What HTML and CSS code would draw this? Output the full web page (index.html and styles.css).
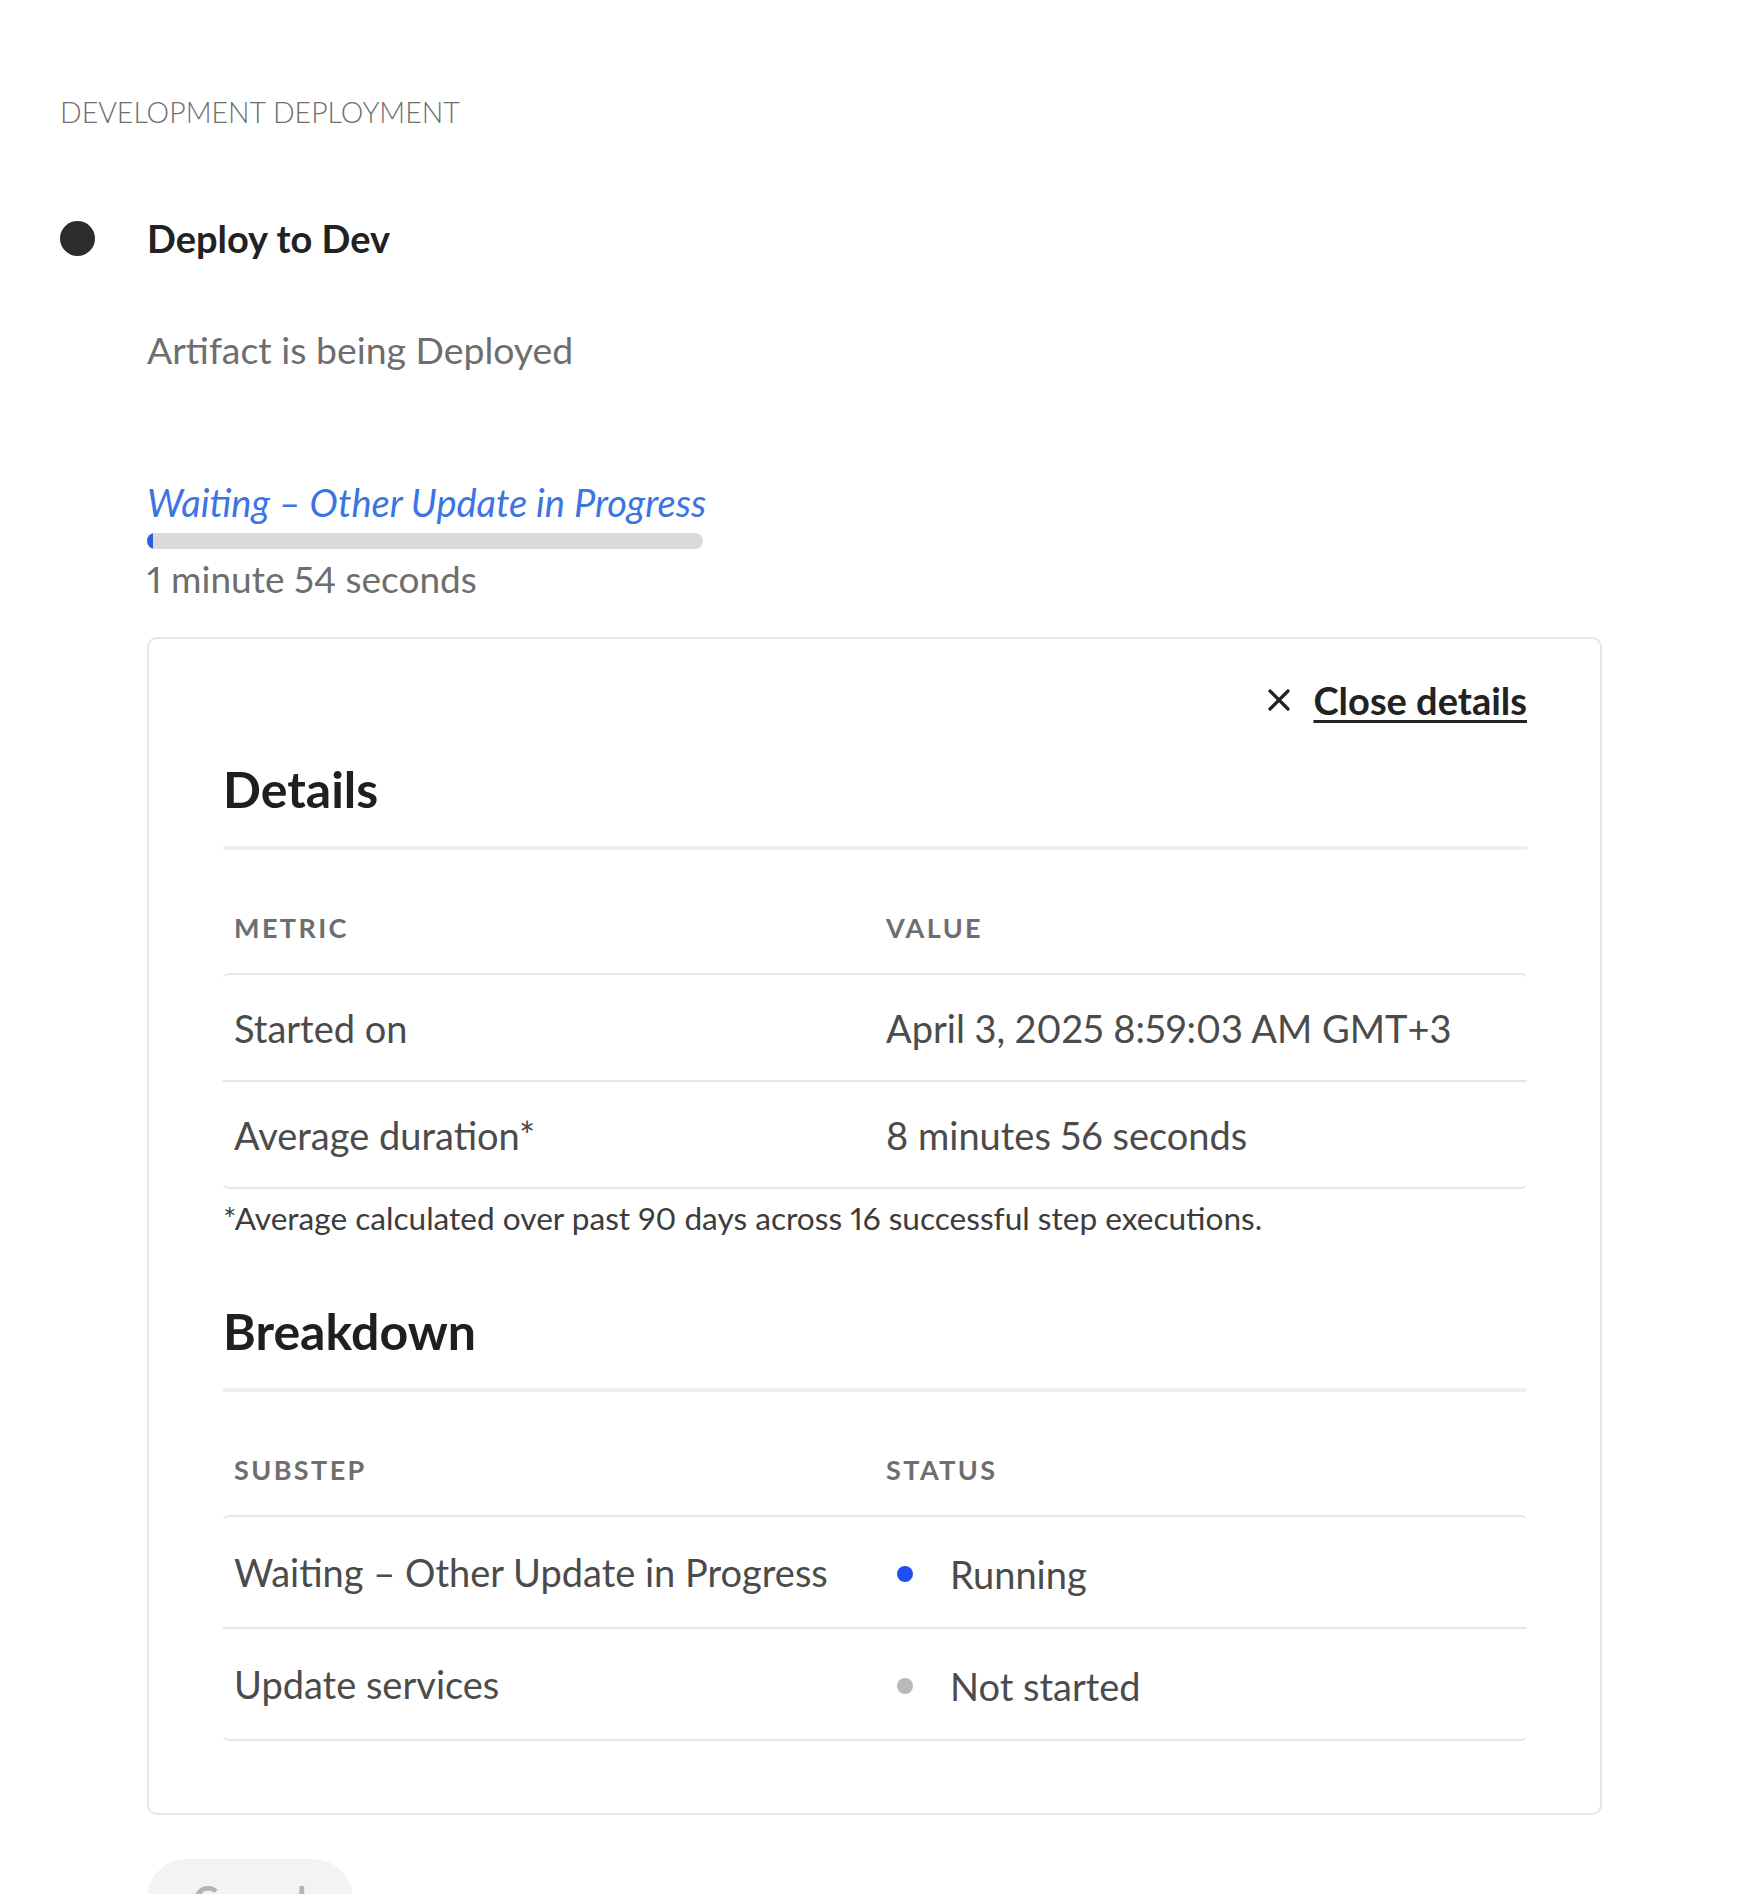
FILE: index.html
```html
<!DOCTYPE html>
<html lang="en">
<head>
<meta charset="utf-8">
<title>Development deployment</title>
<link rel="stylesheet" href="styles.css">
</head>
<body>
<div class="page">
  <div class="section-label">DEVELOPMENT DEPLOYMENT</div>
  <div class="step">
    <div class="step-head">
      <span class="step-dot"></span>
      <span class="step-title">Deploy to Dev</span>
    </div>
    <div class="step-body">
      <p class="step-desc">Artifact is being Deployed</p>
      <div class="progress-label">Waiting – Other Update in Progress</div>
      <div class="track"><div class="fill" style="width:1%"></div></div>
      <div class="elapsed">1 minute 54 seconds</div>

      <section class="card">
        <div class="card-top">
          <a class="close-link" href="#">
            <svg class="close-icon" viewBox="0 0 24 24" width="24" height="24" aria-hidden="true">
              <path d="M3 3 L21 21 M21 3 L3 21" stroke="#222" stroke-width="3.2" stroke-linecap="round" fill="none"/>
            </svg>
            <span class="close-text">Close details</span>
          </a>
        </div>

        <h2 class="card-heading">Details</h2>
        <div class="rule"></div>
        <div class="tbl">
          <div class="tbl-head">
            <div class="th">METRIC</div>
            <div class="th">VALUE</div>
          </div>
          <div class="tbl-body">
            <div class="tr">
              <div class="td">Started on</div>
              <div class="td">April 3, 2025 8:59:03 AM GMT+3</div>
            </div>
            <div class="tr">
              <div class="td">Average duration*</div>
              <div class="td">8 minutes 56 seconds</div>
            </div>
          </div>
        </div>
        <p class="footnote">*Average calculated over past 90 days across 16 successful step executions.</p>

        <h2 class="card-heading heading-breakdown">Breakdown</h2>
        <div class="rule"></div>
        <div class="tbl">
          <div class="tbl-head">
            <div class="th">SUBSTEP</div>
            <div class="th">STATUS</div>
          </div>
          <div class="tbl-body">
            <div class="tr tr-tall">
              <div class="td">Waiting – Other Update in Progress</div>
              <div class="td status"><span class="status-dot running"></span><span class="status-text">Running</span></div>
            </div>
            <div class="tr tr-tall">
              <div class="td">Update services</div>
              <div class="td status"><span class="status-dot idle"></span><span class="status-text">Not started</span></div>
            </div>
          </div>
        </div>
      </section>

      <button class="cancel" type="button" disabled>Cancel</button>
    </div>
  </div>
</div>
</body>
</html>
```

FILE: styles.css
```css
* { box-sizing: border-box; }

html, body {
  margin: 0;
  padding: 0;
  background: #ffffff;
}

body {
  font-family: Lato, "Open Sans", "Noto Sans", sans-serif;
  color: #222222;
  overflow: hidden;
  font-variant-numeric: proportional-nums;
}

.page {
  padding: 94px 0 0 60px;
}

.section-label {
  font-size: 28.5px;
  font-weight: 300;
  line-height: 36px;
  color: #6e6e6e;
}

.step-head {
  margin-top: 83px;
  height: 50px;
  display: flex;
  align-items: center;
  gap: 52px;
}

.step-dot {
  width: 35px;
  height: 35px;
  border-radius: 50%;
  background: #2c2c2c;
  flex: none;
}

.step-title {
  font-size: 38px;
  font-weight: 700;
  color: #222222;
  line-height: 50px;
}

.step-body {
  padding-left: 87px;
}

.step-desc {
  margin: 65px 0 0;
  font-size: 37.4px;
  line-height: 44px;
  color: #6e6e6e;
}

.progress-label {
  margin-top: 108px;
  font-size: 38px;
  font-style: italic;
  line-height: 44px;
  color: #3b74e3;
}

.track {
  margin-top: 9px;
  width: 556px;
  height: 16px;
  border-radius: 8px;
  background: #d9d9d9;
  overflow: hidden;
}

.fill {
  height: 100%;
  background: #2b5fe0;
}

.elapsed {
  margin-top: 8px;
  font-size: 37px;
  line-height: 44px;
  color: #6e6e6e;
}

.card {
  margin-top: 36px;
  width: 1455px;
  border: 2px solid #e6e6e6;
  border-radius: 10px;
  padding: 39px 73px 72px 74px;
  background: #ffffff;
}

.card-top {
  display: flex;
  justify-content: flex-end;
  line-height: 44px;
}

.close-link {
  display: flex;
  align-items: center;
  gap: 22px;
  color: #222222;
  text-decoration: none;
}

.close-icon {
  display: block;
  flex: none;
}

.close-text {
  font-size: 38px;
  font-weight: 700;
  text-decoration: underline;
  text-decoration-thickness: 3px;
  text-underline-offset: 5px;
}

.card-heading {
  margin: 39px 0 0;
  font-size: 50px;
  font-weight: 700;
  line-height: 56px;
  color: #1f1f1f;
}

.heading-breakdown {
  margin-top: 67px;
}

.rule {
  margin-top: 29px;
  height: 4px;
  background: #efefef;
}

.tbl-head {
  display: grid;
  grid-template-columns: 1fr 1fr;
  padding: 63px 0 30px;
}

.th {
  padding: 0 11px;
  font-size: 27px;
  font-weight: 700;
  letter-spacing: 2.4px;
  line-height: 30px;
  color: #6e6e6e;
}

.tbl-body {
  border-top: 2px solid #e6e6e6;
  border-bottom: 2px solid #e6e6e6;
  border-radius: 6px;
}

.tr {
  display: grid;
  grid-template-columns: 1fr 1fr;
  padding: 31px 0 30px;
}

.tr + .tr {
  border-top: 2px solid #e6e6e6;
}

.tr-tall {
  padding: 33px 0 31px;
}

.td {
  padding: 0 11px;
  font-size: 38px;
  line-height: 44px;
  color: #4b4b4b;
}

.status {
  display: flex;
  align-items: center;
  padding-top: 2px;
}

.status-dot {
  width: 16px;
  height: 16px;
  border-radius: 50%;
  margin-left: 11px;
  margin-right: 37px;
  flex: none;
}

.status-dot.running { background: #1f4ef5; }
.status-dot.idle { background: #b9b9b9; }

.footnote {
  margin: 11px 0 0;
  font-size: 31.6px;
  line-height: 36px;
  color: #3c3c3c;
}

.cancel {
  display: block;
  margin-top: 44px;
  height: 80px;
  padding: 0 46px;
  border: none;
  border-radius: 40px;
  background: #f3f3f3;
  font-family: Lato, "Open Sans", sans-serif;
  font-size: 38px;
  font-weight: 700;
  color: #b3b3b3;
  line-height: 80px;
}
```
